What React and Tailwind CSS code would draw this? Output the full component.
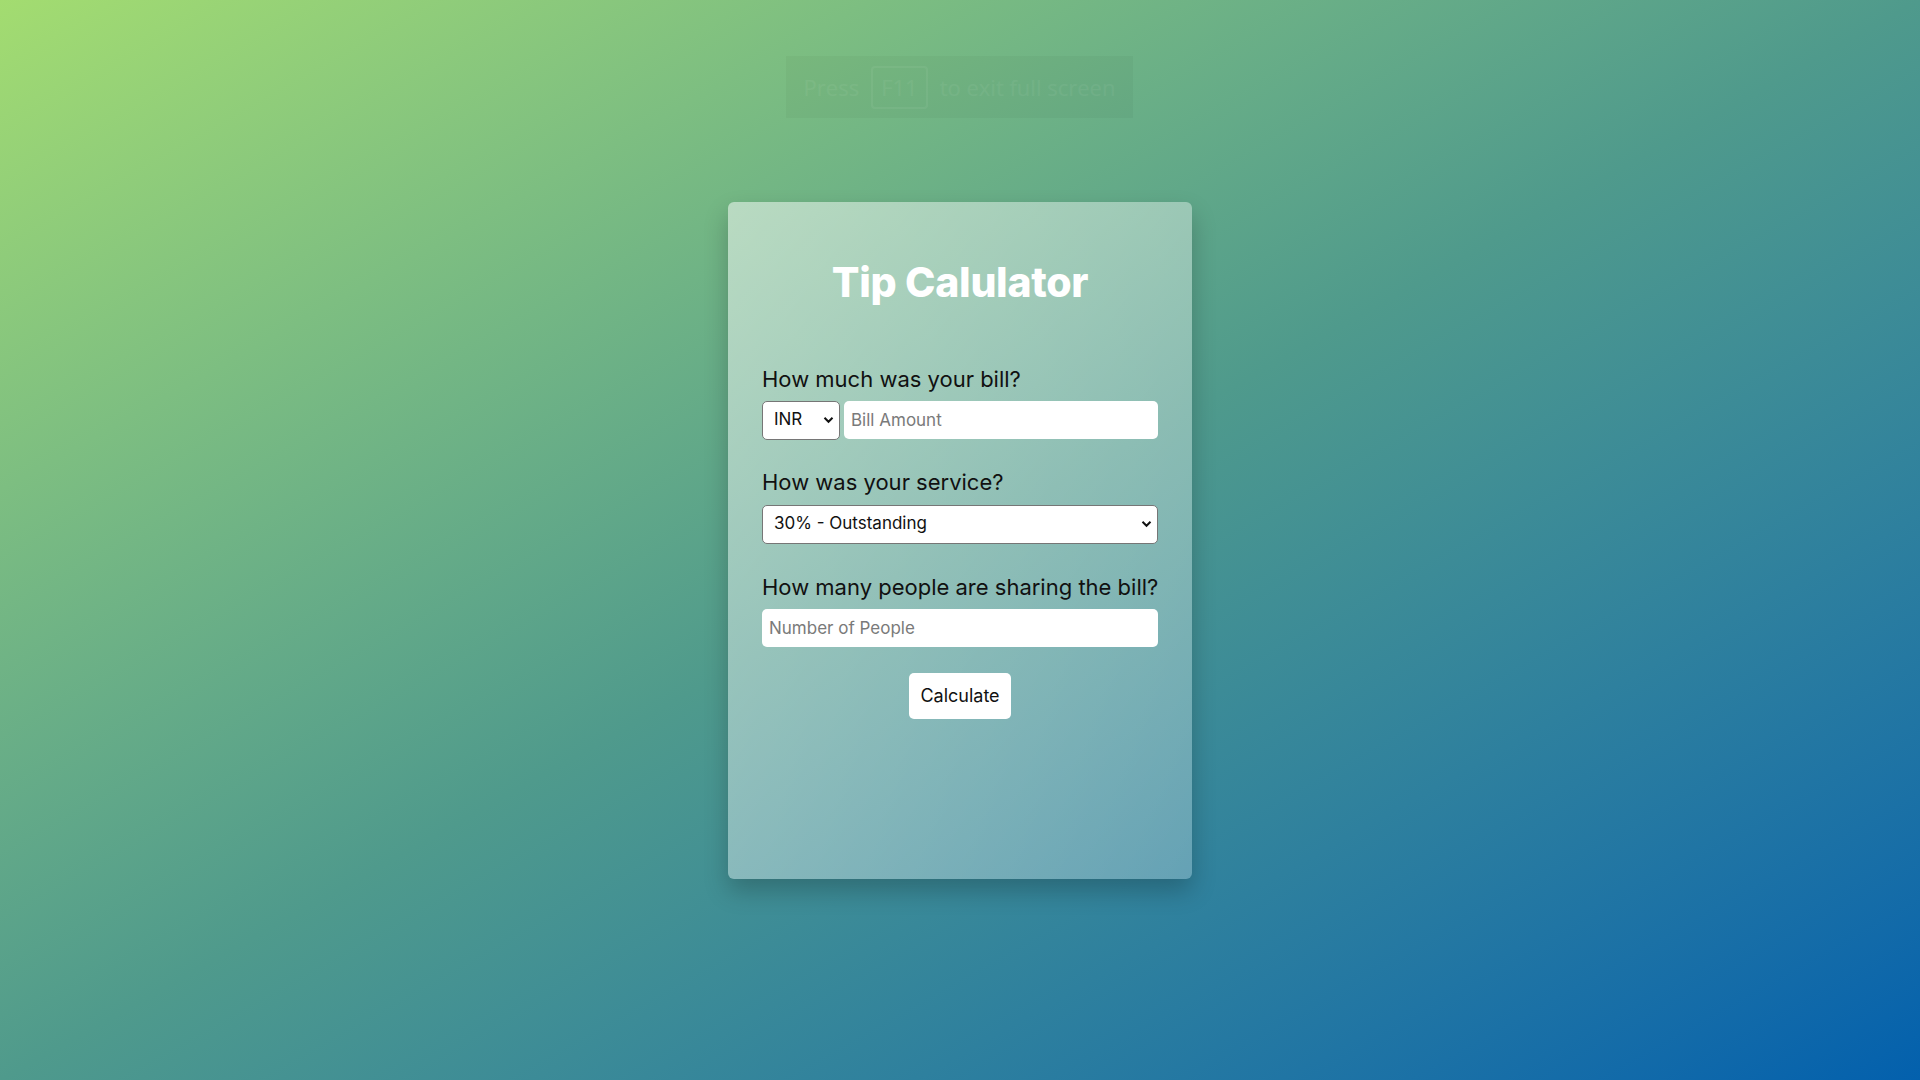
import React, { useState } from "react";

const font = { fontFamily: "Inter, 'Open Sans', sans-serif" };

const Chevron = () => (
    <svg width="11" height="8" viewBox="0 0 11 8" className="pointer-events-none absolute right-[6px] top-1/2 -translate-y-1/2">
        <path d="M1.5 1.8 L5.5 5.8 L9.5 1.8" fill="none" stroke="#111" strokeWidth="2" />
    </svg>
);

const App = () => {
    const [currency, setCurrency] = useState("INR");
    const [service, setService] = useState("0.3");
    const [bill, setBill] = useState("");
    const [people, setPeople] = useState("");

    return (
        <div
            className="relative min-h-screen w-full flex items-center justify-center bg-gradient-to-br from-[#a3dc70] via-[#4f9a8c] to-[#0360ad]"
            style={font}
        >
            {/* full screen hint */}
            <div className="absolute left-[786px] top-[56px] w-[347px] h-[62px] bg-black/[0.03] flex items-center justify-center gap-3 text-[22px] text-white/[0.05]" style={{ fontFamily: "'Open Sans', sans-serif" }}>
                <span>Press</span>
                <span className="border-2 border-white/[0.05] rounded px-2 py-[3px]">F11</span>
                <span>to exit full screen</span>
            </div>

            <div className="w-[464px] h-[677px] rounded-md bg-gradient-to-br from-white/50 to-white/25 shadow-[0_12px_24px_rgba(0,0,0,0.22)] px-[34px] pt-[55px]">
                <h1 className="text-center text-white font-extrabold text-[41px] leading-[50px] tracking-[-0.3px]">Tip Calulator</h1>

                <div className="mt-[57px]">
                    <label className="block text-[22px] leading-[30px] text-[#111]">How much was your bill?</label>
                    <div className="mt-[7px] flex gap-[4px]">
                        <div className="relative w-[78px] h-[39px]">
                            <select
                                value={currency}
                                onChange={(e) => setCurrency(e.target.value)}
                                className="appearance-none w-full h-full bg-white border border-[#767676] rounded-[5px] pl-[11px] text-[17px] text-[#111] outline-none"
                                style={font}
                            >
                                <option>INR</option>
                                <option>USD</option>
                                <option>EUR</option>
                            </select>
                            <Chevron />
                        </div>
                        <input
                            type="number"
                            placeholder="Bill Amount"
                            value={bill}
                            onChange={(e) => setBill(e.target.value)}
                            className="flex-1 h-[38px] bg-white rounded-[5px] px-[7px] text-[17px] placeholder:text-[#7a7a7a] outline-none"
                            style={font}
                        />
                    </div>
                </div>

                <div className="mt-[27px]">
                    <label className="block text-[22px] leading-[30px] text-[#111]">How was your service?</label>
                    <div className="relative mt-[8px] h-[39px]">
                        <select
                            value={service}
                            onChange={(e) => setService(e.target.value)}
                            className="appearance-none w-full h-full bg-white border border-[#767676] rounded-[5px] pl-[11px] text-[17px] text-[#111] outline-none"
                            style={font}
                        >
                            <option value="0.3">30% - Outstanding</option>
                            <option value="0.2">20% - Good</option>
                            <option value="0.15">15% - It was OK</option>
                            <option value="0.1">10% - Bad</option>
                        </select>
                        <Chevron />
                    </div>
                </div>

                <div className="mt-[28px]">
                    <label className="block text-[22px] leading-[30px] text-[#111] whitespace-nowrap">How many people are sharing the bill?</label>
                    <input
                        type="number"
                        placeholder="Number of People"
                        value={people}
                        onChange={(e) => setPeople(e.target.value)}
                        className="mt-[7px] w-full h-[38px] bg-white rounded-[5px] px-[7px] text-[17px] placeholder:text-[#7a7a7a] outline-none"
                        style={font}
                    />
                </div>

                <div className="mt-[26px] flex justify-center">
                    <button className="w-[102px] h-[46px] bg-white rounded-[5px] text-[18px] text-[#111]" style={font}>
                        Calculate
                    </button>
                </div>
            </div>
        </div>
    );
};

export default App;
